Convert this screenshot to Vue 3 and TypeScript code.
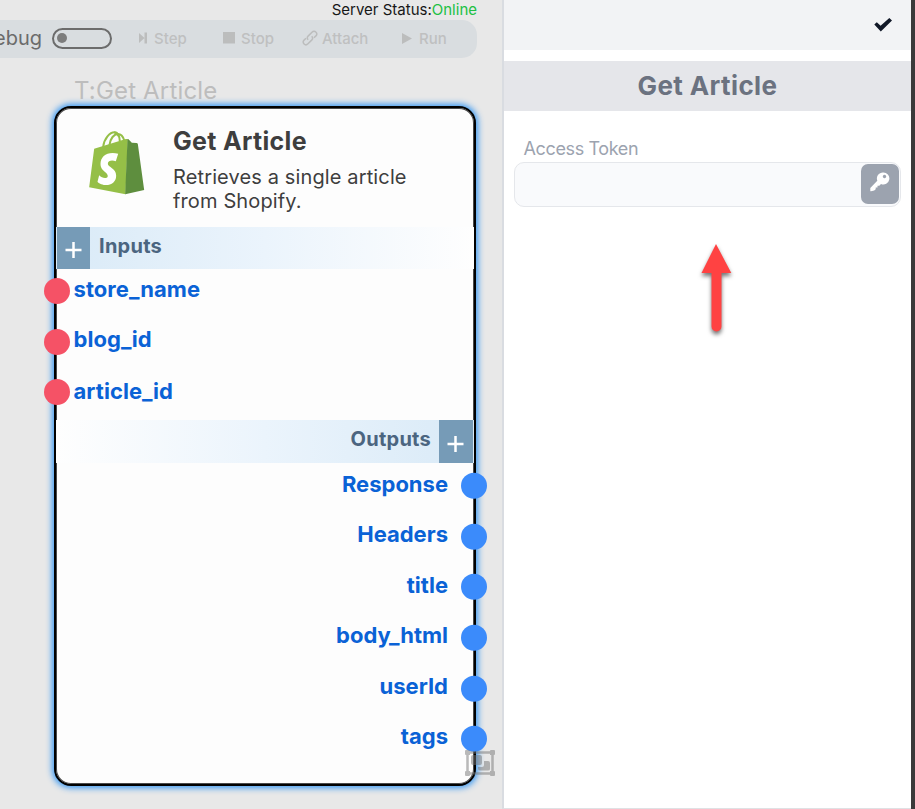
<script setup lang="ts">
interface Port {
  name: string
  nudge: number
}

const inputs: Port[] = [
  { name: 'store_name', nudge: -2 },
  { name: 'blog_id', nudge: -3 },
  { name: 'article_id', nudge: -1 },
]
const outputs: Port[] = [
  { name: 'Response', nudge: -2 },
  { name: 'Headers', nudge: -3 },
  { name: 'title', nudge: -2 },
  { name: 'body_html', nudge: -3 },
  { name: 'userId', nudge: -3 },
  { name: 'tags', nudge: -3 },
]
</script>

<template>
  <div class="app">
    <main class="canvas">
      <div class="status"><span>Server Status:</span><span class="online">Online</span></div>
      <div class="toolbar">
        <span class="debug">Debug</span>
        <span class="toggle"><i class="knob"></i></span>
        <span class="tool step">
          <svg width="8" height="12" viewBox="0 0 8 12"><path d="M0 1L5.5 6L0 11ZM5.5 0.5H8V11.5H5.5Z" /></svg>
          <span>Step</span>
        </span>
        <span class="tool stop">
          <svg width="12" height="12" viewBox="0 0 12 12"><path d="M0 0H12V11.5H0Z" /></svg>
          <span>Stop</span>
        </span>
        <span class="tool attach">
          <svg width="16" height="16" viewBox="0 0 16 16">
            <g class="line">
              <path d="M6.2 9.8C5 8.6 5.2 7.1 6.1 6.1L10 2.2C11.2 1 12.8 1 13.8 2C15 3.1 15 4.7 13.9 5.9L12 7.8" />
              <path d="M9.7 6.3C10.9 7.5 10.8 8.9 9.9 9.9L6 13.8C4.8 15 3.1 15 2.1 14C1 12.9 1 11.3 2.1 10.1L4 8.2" />
            </g>
          </svg>
          <span>Attach</span>
        </span>
        <span class="tool run">
          <svg width="10" height="11" viewBox="0 0 10 11"><path d="M0 0L10 5.5L0 11Z" /></svg>
          <span>Run</span>
        </span>
      </div>

      <section class="node">
        <div class="node-tag">T:Get Article</div>
        <header class="node-head">
          <svg class="logo" width="56" height="64" viewBox="0 0 167 192">
            <g class="handles">
              <path d="M42 48C45 22 62 4 76 4C86 4 91 15 92 31" />
              <path d="M61 42C63 22 75 9 86 9C96 9 102 17 105 28" />
              <path d="M75 4C83 6 88 12 90 18" />
            </g>
            <path class="front" d="M15 53L110 24Q113 23 116 25L109 190L0 169Z" />
            <path class="side" d="M115 24Q118 23 120 27L128 35L142 36Q145 36 146 39L165 177L108 190Z" />
            <path class="letter" d="M87 68L80 91C70 86 56 88 56 98C56 109 81 110 81 134C81 153 66 163 48 162C37 161 27 155 25 152L30 133C36 139 43 142 50 141C57 140 57 133 53 128C47 121 34 116 34 99C34 75 55 60 87 68Z" />
          </svg>
          <div class="node-copy">
            <h2>Get Article</h2>
            <p>Retrieves a single article from Shopify.</p>
          </div>
        </header>
        <div class="strip in">
          <button class="plus"><svg width="18" height="18" viewBox="0 0 18 18"><path d="M8.500 1V17M0.500 9H16.500" /></svg></button>
          <span>Inputs</span>
        </div>
        <ul class="ports in">
          <li v-for="port in inputs" :key="port.name">
            <i class="dot"></i><span :style="{ top: port.nudge + 'px' }">{{ port.name }}</span>
          </li>
        </ul>
        <div class="strip out">
          <span>Outputs</span>
          <button class="plus"><svg width="18" height="18" viewBox="0 0 18 18"><path d="M8.500 1V17M0.500 9H16.500" /></svg></button>
        </div>
        <ul class="ports out">
          <li v-for="port in outputs" :key="port.name">
            <span :style="{ top: port.nudge + 'px' }">{{ port.name }}</span><i class="dot"></i>
          </li>
        </ul>
        <svg class="group" width="30" height="26" viewBox="0 0 30 26">
          <path class="frame" d="M2.5 2.5H27.5V23.5H2.5Z" />
          <path d="M1 0H4Q5 0 5 1V5H1Q0 5 0 4V1Q0 0 1 0ZM26 0H29Q30 0 30 1V4Q30 5 29 5H25V1Q25 0 26 0ZM1 21H5V25Q5 26 4 26H1Q0 26 0 25V22Q0 21 1 21ZM25 21H29Q30 21 30 22V25Q30 26 29 26H26Q25 26 25 25Z" />
          <path d="M8 5H15Q17 5 17 7V13Q17 15 15 15H8Q6 15 6 13V7Q6 5 8 5Z" />
          <path d="M19 11H23Q25 11 25 13V19Q25 20.500 23 20.500H15Q13 20.500 13 18.500V17H17Q19 17 19 15Z" />
        </svg>
      </section>
    </main>

    <aside class="panel">
      <div class="panel-bar">
        <svg width="18" height="14" viewBox="0 0 18 14"><path d="M0.300 6.500L2.800 4.200L6.600 7.800L15.300 0L18 2.600L6.800 13.600Z" /></svg>
      </div>
      <h1>Get Article</h1>
      <div class="field">
        <label>Access Token</label>
        <div class="input">
          <button class="key">
            <svg width="20" height="20" viewBox="0 0 20 20">
              <path fill-rule="evenodd" d="M13 0.500A6 6 0 1 1 11 12L9.300 13.800H7.500V15.600H5.700V17.300L4.200 18.500L1 19.300Q0.300 19.400 0.300 18.700V16L7.300 8.700A6 6 0 0 1 13 0.500ZM14.500 2.800A1.700 1.700 0 1 0 14.510 2.800Z" />
            </svg>
          </button>
        </div>
      </div>
      <svg class="arrow" width="46" height="104" viewBox="0 0 46 104">
        <path d="M21 5L36.300 34H26.500V87.500A5 5 0 0 1 16.500 87.500V34H6.500Z" />
      </svg>
    </aside>
    <div class="edge"></div>
  </div>
</template>

<style>
body {
  margin: 0;
  overflow: hidden;
}
</style>

<style scoped>
.app {
  display: flex;
  width: 915px;
  height: 809px;
  overflow: hidden;
  font-family: Inter, "Liberation Sans", sans-serif;
}
* {
  box-sizing: border-box;
}
svg {
  display: block;
  flex: none;
}
button {
  border: 0;
  padding: 0;
}
.canvas {
  position: relative;
  width: 502px;
  flex: none;
  background: #e8e8e8;
}
.status {
  height: 20px;
  padding-right: 25px;
  text-align: right;
  font-size: 15px;
  line-height: 20px;
  color: #171717;
  white-space: nowrap;
}
.online {
  color: #20c043;
}
.toolbar {
  display: flex;
  align-items: center;
  width: 477px;
  height: 38px;
  padding-bottom: 2px;
  border-radius: 0 15px 15px 0;
  background: #d9dde0;
  overflow: hidden;
  white-space: nowrap;
}
.debug {
  width: 42px;
  display: flex;
  justify-content: flex-end;
  font-size: 20px;
  color: #6b6b6b;
}
.toggle {
  display: flex;
  align-items: center;
  flex: none;
  width: 60px;
  height: 21px;
  margin-left: 10px;
  padding-left: 3px;
  border: 2px solid #6c6c6c;
  border-radius: 11px;
}
.knob {
  width: 10px;
  height: 10px;
  border-radius: 50%;
  background: #7d7d7d;
}
.tool {
  display: flex;
  align-items: center;
  font-size: 15px;
  font-weight: 500;
  color: #bfc0c0;
  fill: #bcbdbd;
}
.line {
  fill: none;
  stroke: #bcbdbd;
  stroke-width: 1.500;
}
.step {
  gap: 7px;
  width: 84px;
  margin-left: 27px;
}
.stop {
  gap: 6px;
  width: 79px;
}
.attach {
  gap: 4px;
  width: 100px;
}
.run {
  gap: 7px;
}
.node {
  position: absolute;
  left: 54px;
  top: 106px;
  display: flex;
  flex-direction: column;
  width: 422px;
  height: 680px;
  border: 2px solid #000;
  border-radius: 17px;
  background: #fdfdfd;
  box-shadow: inset 0 0 0 1px #4a4a4a, 0 0 6px 2px #3797f2;
}
.node-tag {
  position: absolute;
  left: 18px;
  top: -32px;
  font-size: 24px;
  line-height: 30px;
  letter-spacing: 0.17px;
  color: #bdbdbd;
}
.node-head {
  display: flex;
  height: 119px;
  padding: 23px 50px 0 32.500px;
  color: #3e3e3e;
}
.handles {
  fill: none;
  stroke: #95bf47;
  stroke-width: 6;
}
.front {
  fill: #95bf47;
}
.side {
  fill: #5e8e3e;
}
.letter {
  fill: #fff;
}
.node-copy {
  margin: -1px 0 0 28.500px;
  width: 260px;
}
h2 {
  margin: -4px 0 0;
  font-size: 25px;
  line-height: 30px;
  letter-spacing: 0.320px;
  font-weight: 700;
}
p {
  margin: 9px 0 0;
  font-size: 20px;
  line-height: 24px;
  letter-spacing: 0.130px;
}
.strip {
  display: flex;
  flex: none;
  height: 42px;
  font-size: 20px;
  line-height: 38px;
  font-weight: 700;
  letter-spacing: 0.260px;
  color: #4b6580;
}
.strip.in {
  padding-left: 1px;
  gap: 9px;
  background: linear-gradient(90deg, #d9eaf7, #ebf4fc 50%, #fefefe);
}
.strip.out {
  height: 43px;
  justify-content: flex-end;
  gap: 9px;
  padding-right: 1px;
  background: linear-gradient(270deg, #d9eaf7, #ebf4fc 50%, #fefefe);
}
.plus {
  display: flex;
  align-items: center;
  justify-content: center;
  width: 33px;
  padding-top: 4px;
  background: #769bb7;
  fill: none;
  stroke: #fff;
  stroke-width: 2.500;
}
.strip.out .plus {
  width: 34px;
  margin-left: -1px;
}
.ports {
  margin: 0;
  padding: 0;
  list-style: none;
  font-size: 22px;
  font-weight: 700;
  color: #0a62d6;
}
.ports li {
  display: flex;
  align-items: center;
  height: 50.600px;
  gap: 3.500px;
}
.ports span {
  position: relative;
}
.ports.in {
  height: 151px;
  letter-spacing: 0.060px;
}
.ports.in li {
  margin: 0 0 0 -12px;
  transform: translateY(-3px);
}
.ports.out li {
  justify-content: flex-end;
  gap: 13px;
  margin-right: -13px;
  transform: translateY(-2.300px);
}
.dot {
  width: 26px;
  height: 26px;
  border-radius: 50%;
  background: #f55266;
}
.out .dot {
  background: #3b8bfb;
}
.group {
  position: absolute;
  left: 409px;
  top: 642px;
  fill: #777;
  opacity: 0.5;
}
.frame {
  fill: none;
  stroke: #777;
  stroke-width: 2.500;
}
.panel {
  width: 409px;
  border-left: 2px solid #d9dce1;
  border-bottom: 1px solid #dfe1e4;
  background: #fff;
}
.panel-bar {
  display: flex;
  justify-content: flex-end;
  height: 50px;
  padding: 17.500px 19.500px 0 0;
  background: #f2f3f5;
  fill: #111827;
}
h1 {
  margin: 11px 0 0;
  height: 50px;
  font-size: 26px;
  line-height: 49px;
  letter-spacing: 0.380px;
  font-weight: 700;
  text-align: center;
  color: #6b7280;
  background: #e5e6ea;
}
.field {
  padding: 27px 10px 0;
}
label {
  display: block;
  height: 24px;
  padding-left: 9.500px;
  font-size: 18px;
  line-height: 22px;
  letter-spacing: -0.370px;
  color: #9ca3af;
}
.input {
  display: flex;
  justify-content: flex-end;
  width: 387px;
  height: 45px;
  padding: 1px;
  border: 1px solid #e5e7eb;
  border-radius: 10px;
  background: #f9fafc;
}
.key {
  display: flex;
  justify-content: center;
  width: 38px;
  height: 40px;
  padding-top: 8px;
  border-radius: 7px;
  background: #9ca3af;
  fill: #fff;
}
.arrow {
  margin: 32px 0 0 191px;
  fill: #ff4242;
  filter: drop-shadow(0 3px 2px rgba(0, 0, 0, 0.55));
}
.edge {
  width: 4px;
  background: #3a3a3a;
}
</style>
